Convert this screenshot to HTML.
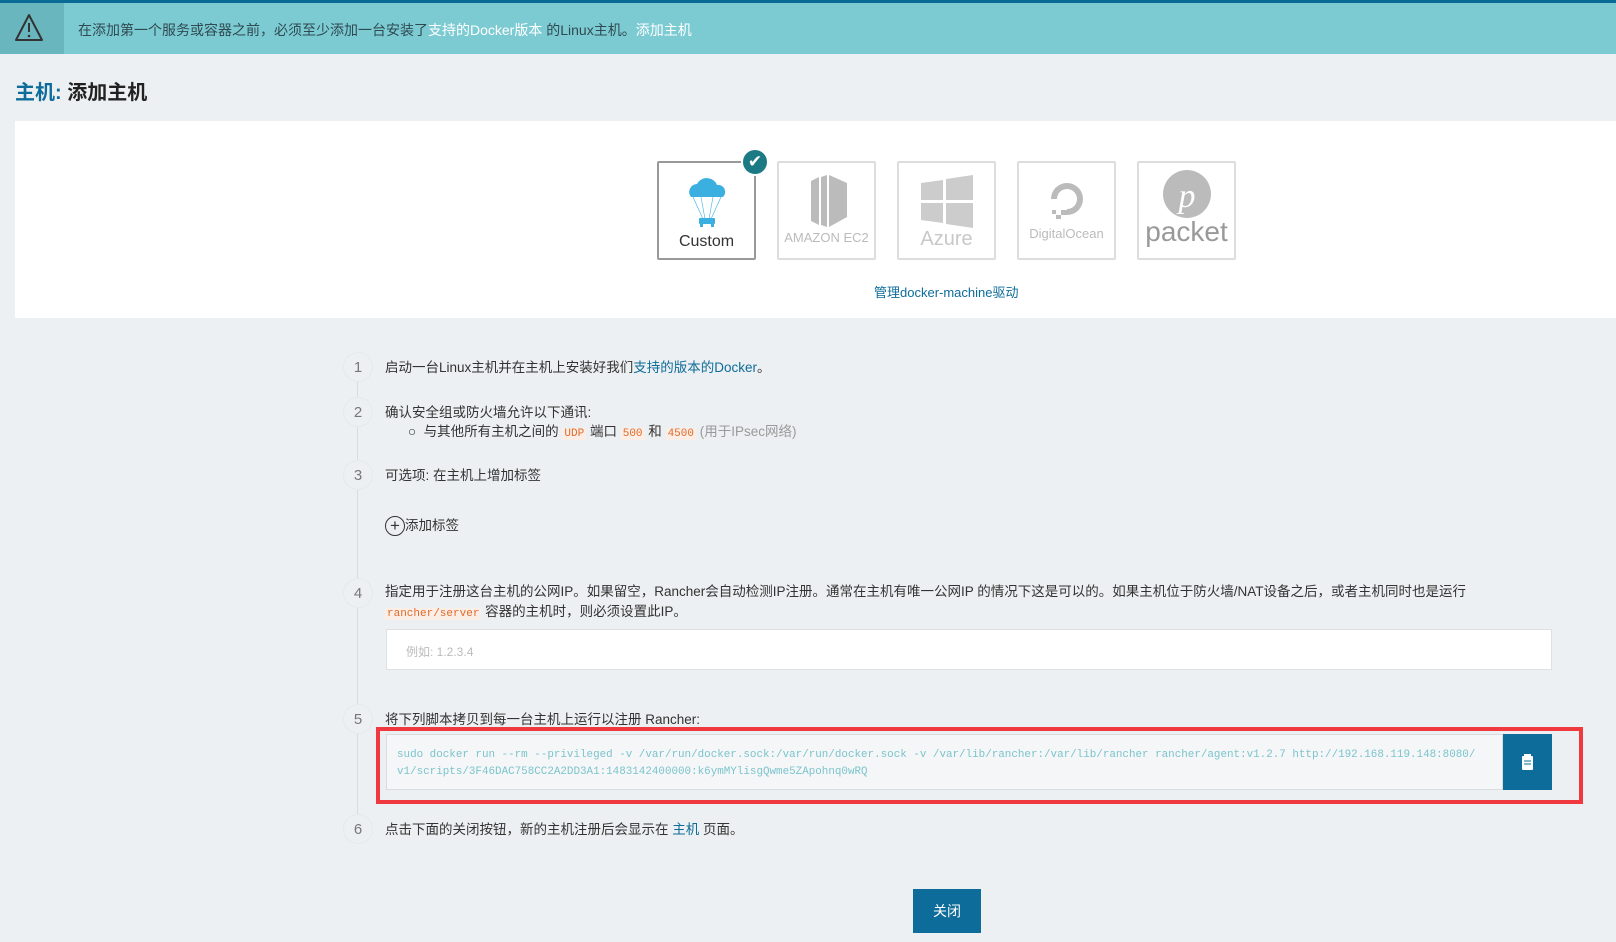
<!DOCTYPE html>
<html><head><meta charset="utf-8"><style>
*{box-sizing:border-box;margin:0;padding:0}
body{width:1616px;height:942px;background:#edf0f2;font-family:"Liberation Sans","Noto Sans CJK SC",sans-serif;color:#333;position:relative;overflow:hidden;font-size:13px}
.abs{position:absolute}
.banner{left:0;top:0;width:1616px;height:54px;background:#7ccbd3;border-top:3px solid #0a6a96}
.banner .ic{position:absolute;left:0;top:0;width:64px;height:51px;background:#6ab6be}
.banner .t{position:absolute;left:78px;top:17px;font-size:14px;color:#2f4a50}
.banner a{color:#fff}
h1{position:absolute;left:15px;top:76px;font-size:20px;font-weight:bold;color:#222}
h1 span{color:#0d6c9a}
.panel{left:15px;top:121px;width:1601px;height:197px;background:#fff}
.tile{position:absolute;top:161px;width:99px;height:99px;border:2px solid #ddd;border-radius:2px;background:#fff;text-align:center;color:#bbb}
.tile.sel{border-color:#999}
a{color:#0d6c9a;text-decoration:none}
.num{position:absolute;left:343px;width:30px;height:30px;border-radius:50%;background:#edf0f2;border:1px solid #e6e9eb;text-align:center;line-height:30px;font-size:15px;color:#777}
.vl{position:absolute;left:357px;top:370px;width:1px;height:455px;background:#d8dcdf}
.tx{position:absolute;left:385px;font-size:13.5px;color:#333}
code{font-family:"Liberation Mono",monospace;font-size:11px;color:#e06a2c;background:#fbeee6;padding:0 2px}
</style></head><body>
<div class="abs banner"><div class="ic"><svg width="64" height="51" viewBox="0 0 64 51"><path d="M29 12 L16 37 L42 37 Z" fill="none" stroke="#333" stroke-width="2" stroke-linejoin="round"/><line x1="29" y1="20" x2="29" y2="29" stroke="#333" stroke-width="2"/><circle cx="29" cy="33" r="1.3" fill="#333"/></svg></div>
<div class="t">在添加第一个服务或容器之前，必须至少添加一台安装了<a>支持的Docker版本</a> 的Linux主机。<a>添加主机</a></div></div>
<h1><span>主机:</span> 添加主机</h1>
<div class="abs panel"></div>
<div class="tile sel" style="left:657px"><svg width="60" height="55" viewBox="0 0 60 55" style="margin-top:12px"><path d="M14 22 a8 8 0 0 1 6-13 a11 11 0 0 1 20 1 a7 7 0 0 1 6 12 z" fill="#3bb0e0"/><g stroke="#3bb0e0" stroke-width=".6"><line x1="16" y1="22" x2="26" y2="44"/><line x1="24" y1="22" x2="28" y2="44"/><line x1="36" y1="22" x2="32" y2="44"/><line x1="44" y1="22" x2="34" y2="44"/></g><rect x="22" y="43" width="16" height="6" rx="1" fill="#3bb0e0"/><rect x="23" y="48" width="3" height="4" fill="#3bb0e0"/><rect x="34" y="48" width="3" height="4" fill="#3bb0e0"/></svg><div style="font-size:16px;color:#333;margin-top:0px">Custom</div></div>
<div class="abs" style="left:741px;top:148px;width:28px;height:28px;border-radius:50%;background:#1c7a85;border:2px solid #fff;color:#fff;text-align:center;line-height:24px;font-size:17px">✔</div>
<div class="tile" style="left:777px"><svg width="60" height="62" viewBox="0 0 60 62" style="margin-top:6px"><path d="M14 12 L22 8 L22 56 L14 52Z M24 8 L30 6 L30 58 L24 56Z M32 6 L50 14 L50 48 L32 58Z" fill="#bbb"/></svg><div style="font-size:13px;margin-top:-4px">AMAZON EC2</div></div>
<div class="tile" style="left:897px"><svg width="60" height="58" viewBox="0 0 60 58" style="margin-top:10px"><path d="M4 10 L26 7 L26 27 L4 27Z M29 6 L56 2 L56 27 L29 27Z M4 30 L26 30 L26 50 L4 47Z M29 30 L56 30 L56 55 L29 51Z" fill="#ccc"/></svg><div style="font-size:20px;color:#c8c8c8;margin-top:-6px">Azure</div></div>
<div class="tile" style="left:1017px"><svg width="60" height="56" viewBox="0 0 60 56" style="margin-top:14px"><path d="M30 38 L30 32 A10 10 0 1 0 20 22 L14 22 A16 16 0 1 1 30 38Z" fill="#bbb"/><rect x="24" y="33" width="6" height="5" fill="#bbb"/><rect x="19" y="38" width="5" height="4" fill="#bbb"/><rect x="15" y="33" width="4" height="4" fill="#bbb"/></svg><div style="font-size:13px;margin-top:-10px">DigitalOcean</div></div>
<div class="tile" style="left:1137px"><svg width="60" height="56" viewBox="0 0 60 56" style="margin-top:4px"><circle cx="30" cy="27" r="24" fill="#bbb"/><text x="30" y="40" text-anchor="middle" font-family="Liberation Serif,serif" font-style="italic" font-size="34" fill="#fff">p</text></svg><div style="font-size:28px;color:#999;margin-top:-10px;font-family:'Liberation Sans',sans-serif">packet</div></div>
<a class="abs" style="left:874px;top:282px;font-size:13px">管理docker-machine驱动</a>
<div class="vl"></div>
<div class="num" style="top:352px">1</div>
<div class="tx" style="top:356px">启动一台Linux主机并在主机上安装好我们<a>支持的版本的Docker</a>。</div>
<div class="num" style="top:397px">2</div>
<div class="tx" style="top:401px">确认安全组或防火墙允许以下通讯:</div>
<div class="tx" style="top:420px;left:408px">○&nbsp; 与其他所有主机之间的 <code>UDP</code> 端口 <code>500</code> 和 <code>4500</code> <span style="color:#999">(用于IPsec网络)</span></div>
<div class="num" style="top:460px">3</div>
<div class="tx" style="top:464px">可选项: 在主机上增加标签</div>
<div class="tx" style="top:514px"><span style="display:inline-block;width:20px;height:20px;border:1.5px solid #333;border-radius:50%;text-align:center;line-height:17px;font-size:17px;vertical-align:middle">+</span>添加标签</div>
<div class="num" style="top:578px">4</div>
<div class="tx" style="top:582px;width:1180px;line-height:20px">指定用于注册这台主机的公网IP。如果留空，Rancher会自动检测IP注册。通常在主机有唯一公网IP 的情况下这是可以的。如果主机位于防火墙/NAT设备之后，或者主机同时也是运行 <code>rancher/server</code> 容器的主机时，则必须设置此IP。</div>
<div class="abs" style="left:386px;top:629px;width:1166px;height:41px;background:#fff;border:1px solid #dde1e4;padding:13px 19px;color:#bbb;font-size:12px">例如: 1.2.3.4</div>
<div class="num" style="top:704px">5</div>
<div class="tx" style="top:708px">将下列脚本拷贝到每一台主机上运行以注册 Rancher:</div>
<div class="abs" style="left:376px;top:727px;width:1207px;height:77px;border:4px solid #f0393e"></div>
<div class="abs" style="left:386px;top:734px;width:1117px;height:56px;background:#f4f6f7;border:1px solid #d8dcdf;padding:12px 10px;font-family:'Liberation Mono',monospace;font-size:10.9px;color:#7cc4cc;line-height:17px;white-space:nowrap;overflow:hidden">sudo docker run --rm --privileged -v /var/run/docker.sock:/var/run/docker.sock -v /var/lib/rancher:/var/lib/rancher rancher/agent:v1.2.7 http://192.168.119.148:8080/<br>v1/scripts/3F46DAC758CC2A2DD3A1:1483142400000:k6ymMYlisgQwme5ZApohnq0wRQ</div>
<div class="abs" style="left:1503px;top:734px;width:49px;height:56px;background:#0d6c9a"><svg width="49" height="56" viewBox="0 0 49 56"><rect x="19" y="22" width="11" height="14" rx="1" fill="#fff"/><rect x="21" y="20" width="7" height="3" fill="#fff"/><g stroke="#0d6c9a" stroke-width="1"><line x1="21" y1="27" x2="28" y2="27"/><line x1="21" y1="30" x2="28" y2="30"/></g></svg></div>
<div class="num" style="top:814px">6</div>
<div class="tx" style="top:818px">点击下面的关闭按钮，新的主机注册后会显示在 <a>主机</a> 页面。</div>
<div class="abs" style="left:913px;top:889px;width:68px;height:44px;background:#0d6c9a;color:#fff;text-align:center;line-height:44px;font-size:14px">关闭</div>
</body></html>
